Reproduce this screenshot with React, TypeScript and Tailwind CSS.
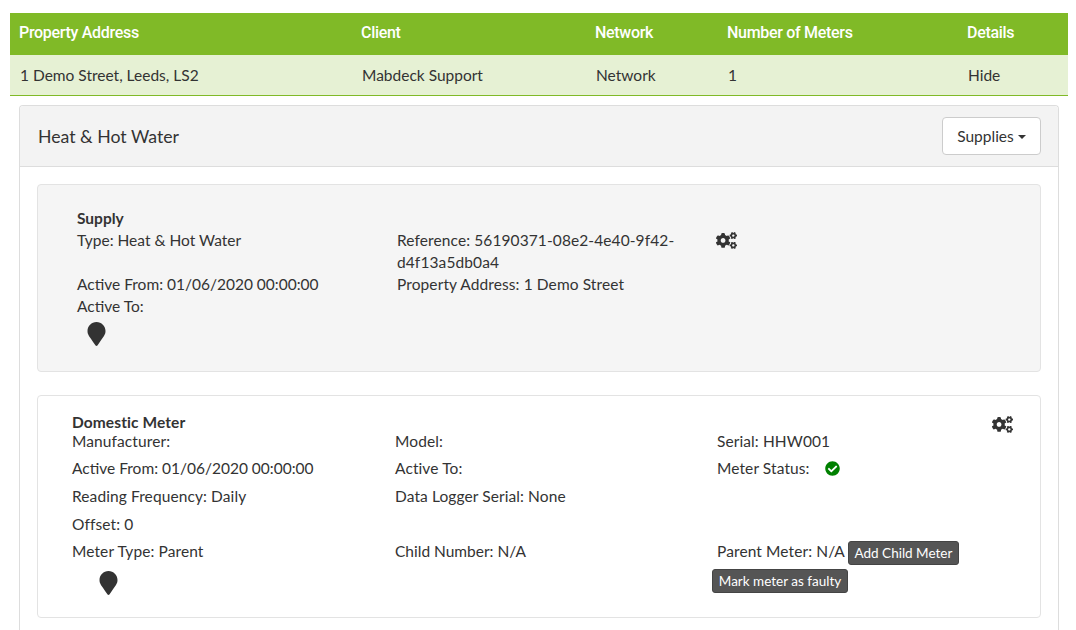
import React from "react";
import { FaCogs, FaMapMarker, FaCheckCircle } from "react-icons/fa";

const Row = ({ cells, h = "h-[27.5px]" }: { cells: React.ReactNode[]; h?: string }) => (
  <div className={`grid grid-cols-[323px_322px_1fr] items-center ${h}`}>
    {cells.map((c, i) => (
      <div key={i}>{c}</div>
    ))}
  </div>
);

export default function App() {
  return (
    <div className="bg-white pl-[10px] pr-[8px] pt-[13px] text-[15.5px] leading-[22px] text-[#333333] font-['Lato','Liberation_Sans',sans-serif] overflow-hidden h-[630px]">
      <div className="grid grid-cols-[342px_234px_132px_240px_1fr] pl-[9px] pb-[2px] h-[42px] items-center bg-[#80ba27] text-white font-['Roboto',sans-serif] font-medium text-[16px] tracking-[-0.3px]">
        <div>Property Address</div>
        <div>Client</div>
        <div>Network</div>
        <div>Number of Meters</div>
        <div>Details</div>
      </div>
      <div className="grid grid-cols-[342px_234px_132px_240px_1fr] pl-[10px] h-[41px] items-center bg-[#e6f1d4] border-b border-[#80ba27]">
        <div>1 Demo Street, Leeds, LS2</div>
        <div>Mabdeck Support</div>
        <div>Network</div>
        <div>1</div>
        <div>Hide</div>
      </div>

      <div className="mx-[9px] mt-[9px] border border-[#dddddd] border-b-0 rounded-t-[4px] h-[600px]">
        <div className="flex items-center justify-between h-[61px] bg-[#f3f3f3] border-b border-[#dddddd] pl-[18px] pr-[17px] rounded-t-[4px]">
          <div className="text-[17.7px] leading-[20px] pt-[2px]">Heat &amp; Hot Water</div>
          <button className="flex items-center h-[38px] w-[99px] justify-center bg-white border border-[#cccccc] rounded-[4px]">
            Supplies
            <span className="ml-[4px] mt-[2px] w-0 h-0 border-x-[4px] border-x-transparent border-t-[4px] border-t-[#333333]" />
          </button>
        </div>

        <div className="px-[17px] pt-[17px]">
          <div className="h-[188px] bg-[#f5f5f5] border border-[#e3e3e3] rounded-[4px] pl-[39px] pt-[22px]">
            <div className="font-bold">Supply</div>
            <div className="grid grid-cols-[320px_319px_1fr]">
              <div>
                <div>Type: Heat &amp; Hot Water</div>
                <div className="h-[22px]" />
                <div>Active From: 01/06/2020 00:00:00</div>
                <div>Active To:</div>
                <FaMapMarker className="ml-[10px] mt-[5px] w-[19px] h-[24px] text-[#333333]" />
              </div>
              <div className="tracking-[0.1px]">
                <div>
                  Reference: 56190371-08e2-4e40-9f42-
                  <br />
                  d4f13a5db0a4
                </div>
                <div>Property Address: 1 Demo Street</div>
              </div>
              <div>
                <FaCogs className="w-[21px] h-[17px] mt-[3px] text-[#333333]" />
              </div>
            </div>
          </div>

          <div className="relative mt-[23px] h-[223px] bg-white border border-[#e3e3e3] rounded-[4px] pl-[34px] pt-[15px] tracking-[0.1px]">
            <FaCogs className="absolute right-[27px] top-[20px] w-[21px] h-[17px] text-[#333333]" />
            <div className="font-bold leading-[22px]">Domestic Meter</div>
            <div className="-mt-[3px]">
              <Row cells={["Manufacturer:", "Model:", "Serial: HHW001"]} h="h-[22px]" />
              <div className="h-[5px]" />
              <Row
                cells={[
                  <span className="tracking-normal">Active From: 01/06/2020 00:00:00</span>,
                  "Active To:",
                  <span className="flex items-center">
                    Meter Status:
                    <FaCheckCircle className="ml-[15px] w-[15px] h-[15px] text-[#008000]" />
                  </span>,
                ]}
                h="h-[22px]"
              />
              <div className="h-[6px]" />
              <Row cells={["Reading Frequency: Daily", "Data Logger Serial: None", ""]} h="h-[22px]" />
              <div className="h-[6px]" />
              <Row cells={["Offset: 0", "", ""]} h="h-[22px]" />
              <div className="h-[5px]" />
              <div className="grid grid-cols-[323px_322px_1fr] h-[22px]">
                <div>Meter Type: Parent</div>
                <div className="tracking-normal">Child Number: N/A</div>
                <div className="flex items-start whitespace-nowrap">
                  Parent Meter: N/A
                  <button className="ml-[3px] mt-[1px] h-[24px] w-[111px] flex items-center justify-center bg-[#555555] border border-[#444444] rounded-[3px] text-white text-[13.5px] leading-[20px] tracking-normal">
                    Add Child Meter
                  </button>
                </div>
              </div>
              <div className="grid grid-cols-[323px_1fr] h-[30px]">
                <FaMapMarker className="ml-[27px] mt-[9px] w-[19px] h-[24px] text-[#333333]" />
                <div className="pl-[317px]">
                  <button className="mt-[7px] h-[24px] w-[136px] flex items-center justify-center bg-[#555555] border border-[#444444] rounded-[3px] text-white text-[13.5px] leading-[20px] whitespace-nowrap tracking-normal">
                    Mark meter as faulty
                  </button>
                </div>
              </div>
            </div>
          </div>
        </div>
      </div>
    </div>
  );
}
